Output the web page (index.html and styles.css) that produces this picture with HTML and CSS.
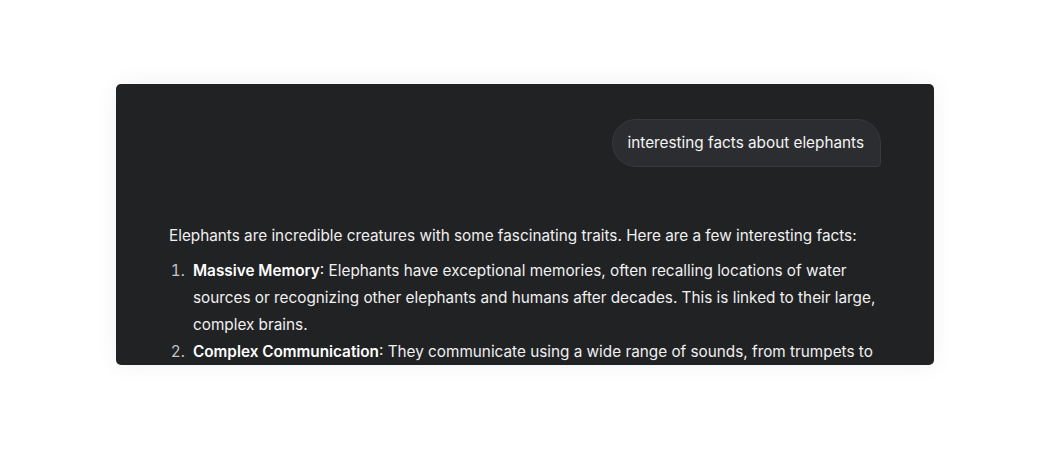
FILE: index.html
```html
<!DOCTYPE html>
<html>
<head>
<meta charset="utf-8">
<link rel="stylesheet" href="styles.css">
</head>
<body>
<div class="stage">
  <div class="card">
    <div class="user-row">
      <div class="bubble">interesting facts about elephants</div>
    </div>
    <div class="answer">
      <p>Elephants are incredible creatures with some fascinating traits. Here are a few interesting facts:</p>
      <ol>
        <li><strong>Massive Memory</strong>: Elephants have exceptional memories, often recalling locations of water sources or recognizing other elephants and humans after decades. This is linked to their large, complex brains.</li>
        <li><strong>Complex Communication</strong>: They communicate using a wide range of sounds, from trumpets to low-frequency rumbles that can travel several kilometers through the ground.</li>
      </ol>
    </div>
  </div>
</div>
</body>
</html>
```
FILE: styles.css
```css
html, body {
  margin: 0;
  padding: 0;
  background: #ffffff;
}
body {
  font-family: Inter, "Noto Sans", sans-serif;
}
.stage {
  width: 1050px;
  height: 450px;
  display: flex;
  justify-content: center;
  padding-top: 84px;
  box-sizing: border-box;
}
.card {
  width: 818px;
  height: 281px;
  background: #212224;
  border-radius: 5px;
  box-shadow: 0 0 24px rgba(0, 0, 0, 0.06);
  overflow: hidden;
  padding: 35px 53px 0 53px;
  box-sizing: border-box;
  color: #f0f0f0;
}
.user-row {
  display: flex;
  justify-content: flex-end;
}
.bubble {
  background: #2c2d30;
  border: 1px solid #38393c;
  border-radius: 24px 24px 4px 24px;
  padding: 11px 16px 11px 15px;
  font-size: 15.3px;
  line-height: 24px;
  color: #f4f4f4;
}
.answer {
  margin-top: 55px;
  font-size: 15.3px;
  line-height: 27px;
}
.answer p {
  margin: 0 0 8px 0;
}
.answer ol {
  margin: 0;
  padding-left: 24px;
}
.answer li::marker {
  content: counter(list-item) ".\00a0\00a0";
  color: #c4c4c4;
}
.answer strong {
  font-weight: 600;
  color: #ffffff;
}
```
